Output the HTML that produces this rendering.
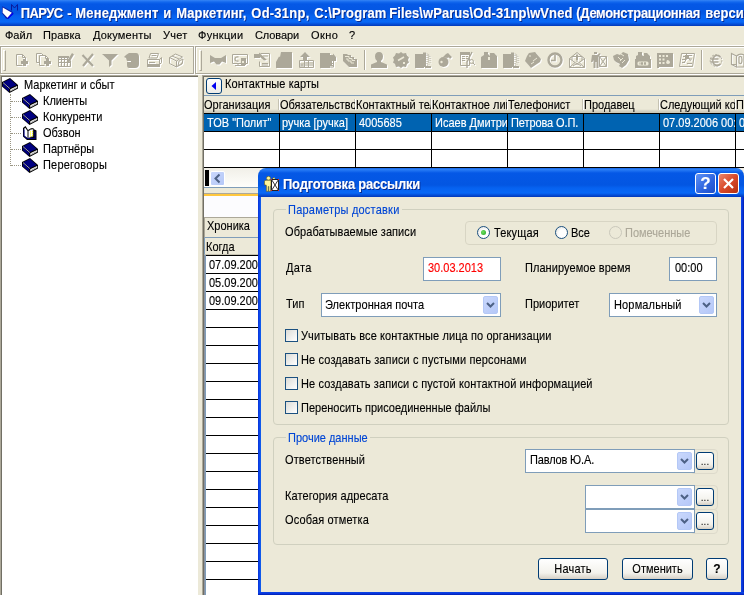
<!DOCTYPE html>
<html lang="ru">
<head>
<meta charset="utf-8">
<title>ПАРУС - Менеджмент и Маркетинг</title>
<style>
html,body{margin:0;padding:0;}
body{width:744px;height:595px;overflow:hidden;background:#ECE9D8;position:relative;will-change:transform;-webkit-text-stroke:0.12px;
 font-family:"Liberation Sans",sans-serif;font-size:11px;color:#000;}
*{box-sizing:border-box;}
.a{position:absolute;white-space:nowrap;line-height:13px;}
span.a,#tree .r,.gl,.btn>span{transform:scaleY(1.12);transform-origin:0 10.3px;}
.btn>span{display:inline-block;line-height:13px;}
.nt{transform:none !important;}
.tt{transform:scaleY(1.1) !important;transform-origin:0 12.5px !important;}
/* main title */
#mtitle{left:0;top:0;width:744px;height:26px;
 background:linear-gradient(#3585F5 0,#1268EE 2px,#0558E6 4px,#0356E2 13px,#0662F0 16px,#0868F6 22px,#0555E0 23.5px,#0338B8 26px);}
#mtitle .txt{position:absolute;top:6px;transform:scaleY(1.1);transform-origin:0 12.5px;font-weight:bold;font-size:13px;line-height:16px;color:#fff;letter-spacing:0.12px;white-space:nowrap;text-shadow:1px 1px 0 #0A2A8C;}
/* menu */
#menu{left:0;top:26px;width:744px;height:19px;background:#ECE9D8;}
#menu span{position:absolute;top:3px;line-height:13px;}
/* toolbar */
.band{border:1px solid #ACA899;box-shadow:inset 1px 1px 0 #fff,1px 1px 0 #fff;}
.grip{position:absolute;width:3px;height:21px;top:50px;border-left:1px solid #fff;border-top:1px solid #fff;border-right:1px solid #ACA899;border-bottom:1px solid #ACA899;}
.ic{position:absolute;overflow:visible;filter:drop-shadow(1px 1px 0 #fff);}
/* tree */
#tree{left:0;top:75px;width:198px;height:520px;background:#fff;border-top:2px solid #716F64;border-left:2px solid #716F64;box-shadow:inset 0 0 0 0 #000;}
#tree .r{position:absolute;line-height:13px;}
/* right */
#rp{left:204px;top:75px;width:540px;height:520px;background:#fff;}
.hl{position:absolute;left:0;width:540px;height:1px;background:#000;}
.vl{position:absolute;top:39px;width:1px;height:54px;background:#000;}
/* dialog */
#dlg{left:258px;top:168px;width:486px;height:427px;background:#ECE9D8;border-radius:8px 8px 0 0;overflow:hidden;}
.gb{position:absolute;border:1px solid #D0D0BF;border-radius:4px;}
.gl{position:absolute;color:#0046D5;background:#ECE9D8;padding:0 2px;line-height:13px;}
.inp{position:absolute;background:#fff;border:1px solid #7F9DB9;}
.cbtn{position:absolute;width:15px;height:18px;border-radius:2px;background:linear-gradient(135deg,#C9D7FC,#B5C8F8);border:1px solid #B4C8F6;}
.chk{position:absolute;width:13px;height:13px;border:1px solid #1C5180;background:linear-gradient(135deg,#DCDCD7,#fff);}
.btn{position:absolute;border:1px solid #003C74;border-radius:3px;background:linear-gradient(#fff,#F3F2EC 70%,#D6D0C5);text-align:center;line-height:20px;}
.rad{position:absolute;width:13px;height:13px;border-radius:50%;border:1px solid #1C5180;background:radial-gradient(circle at 60% 60%,#fff 40%,#DCDCD7);}
</style>
</head>
<body>
<!-- MAIN TITLE -->
<div class="a" id="mtitle">
 <svg style="position:absolute;left:0;top:0" width="22" height="22" viewBox="0 0 22 22">
  <path d="M2.300 6.300 L12.300 11.800 L13.500 13.500 L8 19 L6 18.500 L2 13 Z" fill="#0A1EA8"/>
  <path d="M12.500 12.500 L13.500 14 L8.200 19 L7 18 Z" fill="#0000F0"/>
  <path d="M2.800 7.500 L11.800 12.700 L7.400 17.800 L2.600 12.700 Z" fill="#fff"/>
  <path d="M11.500 10.500 V4.500 L14.500 8 L17.500 4.500 V10.500" fill="none" stroke="#0A1A9A" stroke-width="1"/>
 </svg>
 <span class="txt" style="left:20.8px;letter-spacing:-0.60px">ПАРУС</span>
 <span class="txt" style="left:67.3px;letter-spacing:1.36px">-</span>
 <span class="txt" style="left:75.3px;letter-spacing:0.15px">Менеджмент</span>
 <span class="txt" style="left:163.3px;letter-spacing:0.20px">и</span>
 <span class="txt" style="left:176.3px;letter-spacing:0.04px">Маркетинг,</span>
 <span class="txt" style="left:251.3px;letter-spacing:0.23px">Od-31np,</span>
 <span class="txt" style="left:314.3px;letter-spacing:0.14px">C:\Program</span>
 <span class="txt" style="left:389.3px;letter-spacing:0.07px">Files\wParus\Od-31np\wVned</span>
 <span class="txt" style="left:576.3px;letter-spacing:-0.33px">(Демонстрационная</span>
 <span class="txt" style="left:705.3px;letter-spacing:0.06px">версия</span>
</div>
<!-- MENU -->
<div class="a" id="menu">
 <span style="left:5px">Файл</span><span style="left:43px;letter-spacing:0.1px">Правка</span><span style="left:93px;letter-spacing:0.2px">Документы</span><span style="left:163px;letter-spacing:0.3px">Учет</span><span style="left:198px;letter-spacing:0.3px">Функции</span><span style="left:255px;letter-spacing:-0.1px">Словари</span><span style="left:311px;letter-spacing:0.4px">Окно</span><span style="left:349px">?</span>
</div>
<!-- TOOLBAR -->
<div class="a" style="left:0;top:45px;width:744px;height:1px;background:#fff"></div>
<div class="a band" style="left:0;top:46px;width:194px;height:28px"></div>
<div class="a band" style="left:195px;top:46px;width:560px;height:28px"></div>
<div class="grip" style="left:3px"></div>
<div class="grip" style="left:199px"></div>
<!-- TREE -->
<div class="a" id="tree">
 <span class="r" style="left:22px;top:2px">Маркетинг и сбыт</span>
 <span class="r" style="left:41px;top:18px">Клиенты</span>
 <span class="r" style="left:41px;top:34px;letter-spacing:0.1px">Конкуренти</span>
 <span class="r" style="left:41px;top:50px">Обзвон</span>
 <span class="r" style="left:41px;top:66px">Партнёры</span>
 <span class="r" style="left:41px;top:82px;letter-spacing:0.2px">Переговоры</span>
</div>
<div class="a" style="left:0;top:75px;width:198px;height:1px;background:#ACA899"></div><div class="a" style="left:0;top:75px;width:1px;height:520px;background:#ACA899"></div>
<!--ICONS-->
<svg class="ic" style="left:14px;top:52px;" width="16" height="16" viewBox="0 0 16 16"><path d="M2.5 2.5 h6 l3 3 v2 M2.5 2.5 v11 h6 M8.5 2.5 v3 h3" fill="none" stroke="#ACA899" stroke-width="1"/><path d="M7 9 h2 v-2 h3 v2 h2 v3 h-2 v2 h-3 v-2 h-2 z" fill="#ACA899" stroke="none" stroke-width="1"/></svg>
<svg class="ic" style="left:36px;top:52px;" width="16" height="16" viewBox="0 0 16 16"><path d="M0.5 1.5 h5 l2 2 M0.5 1.5 v9 h3 M3.5 3.5 h6 l3 3 v1 M3.5 3.5 v10 h5 M9.5 3.5 v3 h3" fill="none" stroke="#ACA899" stroke-width="1"/><path d="M8 9 h2 v-2 h3 v2 h2 v3 h-2 v2 h-3 v-2 h-2 z" fill="#ACA899" stroke="none" stroke-width="1"/></svg>
<svg class="ic" style="left:58px;top:52px;" width="16" height="16" viewBox="0 0 16 16"><path d="M0.5 4.5 h10 M0.5 4.5 v10 h12 v-6 M0.5 7.5 h10 M0.5 10.5 h12 M3.5 6 v8 M6.5 6 v8 M9.5 6 v8" fill="none" stroke="#ACA899" stroke-width="1"/><path d="M0 4 h11 v2 h-11 z" fill="#ACA899" stroke="none" stroke-width="1"/><path d="M9 9 L14 1 L16 2.5 L11.5 10 L9 11 Z" fill="#ACA899" stroke="none" stroke-width="1"/></svg>
<svg class="ic" style="left:80px;top:52px;" width="16" height="16" viewBox="0 0 16 16"><path d="M2.5 3 L13 14 M13 2 L3 14" fill="none" stroke="#ACA899" stroke-width="2.2"/></svg>
<svg class="ic" style="left:102px;top:52px;" width="16" height="16" viewBox="0 0 16 16"><path d="M0 2 H16 L9.5 8.5 V13 L7 15 V8.5 Z" fill="#ACA899" stroke="none" stroke-width="1"/></svg>
<svg class="ic" style="left:124px;top:52px;" width="16" height="16" viewBox="0 0 16 16"><path d="M5 1 H12 Q15 1 15 5 V12 Q15 16 11 16 H5 Q3 16 3 13 V10 H7 V9 H3 L2 6 L0 5 L2 3 Z" fill="#ACA899" stroke="none" stroke-width="1"/></svg>
<svg class="ic" style="left:146px;top:52px;" width="16" height="16" viewBox="0 0 16 16"><path d="M4.5 1.5 h8 l-1.5 4.5 h-8 z M5.5 3.5 h5 M1.5 7.5 h12 v5 h-12 z M13.5 7.5 l2 -2 v5 l-2 2 M3 10.5 h6" fill="none" stroke="#ACA899" stroke-width="1"/><path d="M1 12 h13 v3 h-13 z" fill="#ACA899" stroke="none" stroke-width="1"/></svg>
<svg class="ic" style="left:168px;top:52px;" width="16" height="16" viewBox="0 0 16 16"><path d="M1.5 5.5 l6 -3.5 l7 3 l-6 4 z M1.5 5.5 v6 l7 3.5 v-6 M8.5 15 l6 -4 v-2 M4 4 l7 3 M11 9 l4 -2 l-1 5 l-4 2 z" fill="none" stroke="#ACA899" stroke-width="1"/></svg>
<svg class="ic" style="left:210px;top:52px;" width="16" height="16" viewBox="0 0 16 16"><path d="M0 3 L5 6 H11 L16 3 V11 L12 9.5 L9.5 12.5 H6.5 L4 9.5 L0 11 Z" fill="#ACA899" stroke="none" stroke-width="1"/></svg>
<svg class="ic" style="left:232px;top:52px;" width="16" height="16" viewBox="0 0 16 16"><path d="M0.5 2.5 h15 v9 h-15 z M3 13.5 h10 M6 11.5 v2 M10 11.5 v2" fill="none" stroke="#ACA899" stroke-width="1"/><path d="M6.5 5 Q3 4.5 3 7 Q3 9.5 6.5 9" fill="none" stroke="#ACA899" stroke-width="1.3"/><path d="M9 6 h5 v7 h-5 z" fill="#ACA899" stroke="none" stroke-width="1"/><path d="M10 9 h2 v2 h-2 z" fill="#ECE9D8" stroke="none" stroke-width="1"/></svg>
<svg class="ic" style="left:254px;top:52px;" width="16" height="16" viewBox="0 0 16 16"><path d="M6.5 1.5 h9 v13 h-10 v-5 M8 11.5 h6 M8 13 h6 M9 4 h5" fill="none" stroke="#ACA899" stroke-width="1"/><path d="M0 2 H5 V0.5 L13 8 L10 8.5 L6 5 V6 H0 Z" fill="#ACA899" stroke="none" stroke-width="1"/></svg>
<svg class="ic" style="left:276px;top:52px;" width="16" height="16" viewBox="0 0 16 16"><path d="M5 0 H16 V16 H0 V10 L3 4.5 L4 5 Z" fill="#ACA899" stroke="none" stroke-width="1"/></svg>
<svg class="ic" style="left:298px;top:52px;" width="16" height="16" viewBox="0 0 16 16"><path d="M1.5 8.5 h14 v7 h-14 z M6.5 8.5 v7 M6.5 11 h9 M6.5 13 h9 M10.5 8.5 v7 M3 15 v-4 M5 15 v-4 M3 13 h2" fill="none" stroke="#ACA899" stroke-width="1"/><path d="M7 0 L12 5 H9 V8 H5 V5 H2 Z" fill="#ACA899" stroke="none" stroke-width="1"/></svg>
<svg class="ic" style="left:320px;top:52px;" width="16" height="16" viewBox="0 0 16 16"><path d="M0 1 H10 V3 H13 V1.5 L16 5 V9 H12 V14 H10 V16 H0 Z" fill="#ACA899" stroke="none" stroke-width="1"/><path d="M10 11.5 h3 M10 13.5 h3 M13.5 9 v6 h-3.5" fill="none" stroke="#ACA899" stroke-width="1"/></svg>
<svg class="ic" style="left:342px;top:52px;" width="16" height="16" viewBox="0 0 16 16"><path d="M1 2 H5 L6 3 H9 V5 H12 V7 H15 V15 H7 L1 9 Z" fill="#ACA899" stroke="none" stroke-width="1"/><path d="M3 4.500 H7 V6.500 H10 V8.500 H13 M4 7 H6 V9 H9 V11 H12" stroke="#ECE9D8" stroke-width="1" fill="none"/></svg>
<svg class="ic" style="left:371px;top:52px;" width="16" height="16" viewBox="0 0 16 16"><path d="M8 0 Q12 0 12 4.5 Q12 8 10 9 V10 L16 12.5 V16 H0 V12.5 L6 10 V9 Q4 8 4 4.5 Q4 0 8 0 Z" fill="#ACA899" stroke="none" stroke-width="1"/></svg>
<svg class="ic" style="left:393px;top:52px;" width="16" height="16" viewBox="0 0 16 16"><path d="M8 0 L10 1.5 L13 1 L14 3.5 L16 5.5 L15 8 L16 10.5 L14 12 L13 15 L10 14.5 L8 16 L6 14.5 L3 15 L2 12 L0 10.5 L1 8 L0 5.5 L2 3.5 L3 1 L6 1.5 Z" fill="#ACA899" stroke="none" stroke-width="1"/><path d="M5 8.5 L11 5" stroke="#ECE9D8" stroke-width="1.6" fill="none"/><path d="M10 10 h2 v2 h-2 z" fill="#ECE9D8" stroke="none" stroke-width="1"/></svg>
<svg class="ic" style="left:415px;top:52px;" width="16" height="16" viewBox="0 0 16 16"><path d="M0 2 H8 V0.5 H11 V2 V15 H9 V16 H0 Z" fill="#ACA899" stroke="none" stroke-width="1"/><path d="M11.5 2 Q15 2 15 6 V10 Q15 13 12 13 V15" stroke="#ACA899" stroke-width="1" fill="none" stroke-dasharray="1 1"/><path d="M10 14 h6 v2 h-6 z" fill="#ACA899" stroke="none" stroke-width="1"/><path d="M12 3 v9 M13.5 3.5 v8" stroke="#ACA899" stroke-width="1" stroke-dasharray="1 1" fill="none"/></svg>
<svg class="ic" style="left:437px;top:52px;" width="16" height="16" viewBox="0 0 16 16"><circle cx="6.5" cy="10" r="5" fill="#ACA899"/><path d="M6 5 L9 2 L11 1 L12 2 L15 5 L13 7 L12 5.5 L10 6 Z" fill="#ACA899" stroke="none" stroke-width="1"/><circle cx="4.5" cy="10" r="1.2" fill="#ECE9D8"/></svg>
<svg class="ic" style="left:459px;top:52px;" width="16" height="16" viewBox="0 0 16 16"><path d="M1.5 1.5 h9 v12 h-9 z M3 4.5 h3 M3 6.5 h3 M3 8.5 h3 M7 4.5 h2 M7 6.5 h2" fill="none" stroke="#ACA899" stroke-width="1"/><path d="M1 0 h10 v3 h-10 z" fill="#ACA899" stroke="none" stroke-width="1"/><path d="M13 0 L8 10 V16" fill="none" stroke="#ACA899" stroke-width="1.4"/><circle cx="12.5" cy="9.500" r="2" fill="none" stroke="#ACA899"/><path d="M14 11 l2 2" fill="none" stroke="#ACA899" stroke-width="1"/></svg>
<svg class="ic" style="left:481px;top:52px;" width="16" height="16" viewBox="0 0 16 16"><path d="M3 0 H7 V2 L9 4 V1 H13 L16 4 V16 H0 V5 L3 3 Z" fill="#ACA899" stroke="none" stroke-width="1"/><path d="M7 5 h2 v3 h-2 z" fill="#ECE9D8" stroke="none" stroke-width="1"/></svg>
<svg class="ic" style="left:503px;top:52px;" width="16" height="16" viewBox="0 0 16 16"><path d="M0 2 H8 V0.5 H11 V2 V15 H9 V16 H0 Z" fill="#ACA899" stroke="none" stroke-width="1"/><path d="M10 14 h6 v2 h-6 z" fill="#ACA899" stroke="none" stroke-width="1"/><path d="M11.5 2 Q15 2 15 6 V10 Q15 13 12 13 V15 M12 3 v9 M13.5 3.5 v8" stroke="#ACA899" stroke-width="1" stroke-dasharray="1 1" fill="none"/></svg>
<svg class="ic" style="left:525px;top:52px;" width="16" height="16" viewBox="0 0 16 16"><path d="M4 1 L10 0 L16 7 L15 10 L6 16 L0 9 L2 4 Z" fill="#ACA899" stroke="none" stroke-width="1"/><path d="M4 4 h2 M8 9 l4 -3 M6 12 l3 -2" stroke="#ECE9D8" stroke-width="1" fill="none"/></svg>
<svg class="ic" style="left:547px;top:52px;" width="16" height="16" viewBox="0 0 16 16"><circle cx="8" cy="8" r="6.5" fill="none" stroke="#ACA899" stroke-width="2.4"/><path d="M8 3 V8.5 H4" fill="none" stroke="#ACA899" stroke-width="1.6"/></svg>
<svg class="ic" style="left:569px;top:52px;" width="16" height="16" viewBox="0 0 16 16"><path d="M0.5 6.5 L8 0.5 L15.5 6.5 V15.5 H0.500 Z M0.5 6.5 L8 12 L15.5 6.5 M0.5 15.5 L6 10.5 M15.5 15.5 L10 10.5 M3 4.500 h10 v4 M3 4.500 v4 M8 2 v8 M4 14 Q8 10 12 14" fill="none" stroke="#ACA899" stroke-width="1"/><path d="M7 3 h2 v5 h-2 z" fill="#ACA899" stroke="none" stroke-width="1"/></svg>
<svg class="ic" style="left:591px;top:52px;" width="16" height="16" viewBox="0 0 16 16"><path d="M3 0 h3 v2 h-3 z M1 3 H6 L9 1 L9.5 2 L7.5 5 V16 H5.5 V10 H4.5 V16 H2.500 V8 L1.500 10 H0 Z" fill="#ACA899" stroke="none" stroke-width="1"/><path d="M8.5 4.5 h7 v10 h-7 z M8.5 4.5 l7 10 M15.5 4.5 l-7 10" fill="none" stroke="#ACA899" stroke-width="1"/></svg>
<svg class="ic" style="left:613px;top:52px;" width="16" height="16" viewBox="0 0 16 16"><path d="M0 4 L4 2 L7 3 L10 0 L15 2 L16 8 L13 13 L9 16 L6 14 L7 12 L3 10 L1 8 Z" fill="#ACA899" stroke="none" stroke-width="1"/><path d="M5 5 l3 3 M7 9 l3 -3 M9 11 l3 -3 M8 2 l3 2" stroke="#ECE9D8" stroke-width="1" fill="none"/></svg>
<svg class="ic" style="left:635px;top:52px;" width="16" height="16" viewBox="0 0 16 16"><path d="M3 0 H7 V3 L8 4 H9 V1 H12 L15 4 V7 H16 V16 H0 V7 H1 V4 L3 3 Z" fill="#ACA899" stroke="none" stroke-width="1"/><rect x="2.500" y="9.500" width="11" height="4" rx="1.5" fill="#ECE9D8"/><path d="M5 10.5 v2 M7.5 10.5 v2 h-1 v-2 h1 M10.5 10.5 v2 h-1 v-2 h1" fill="none" stroke="#ACA899" stroke-width="1"/></svg>
<svg class="ic" style="left:657px;top:52px;" width="16" height="16" viewBox="0 0 16 16"><path d="M0 1 H16 V15 H2 V16 H0 Z" fill="#ACA899" stroke="none" stroke-width="1"/><path d="M2 3 h2 v2 h-2 z M5.500 3 h2 v2 h-2 z M9 3 h2 v2 h-2 z M2 6.500 h2 v2 h-2 z M5.500 6.500 h2 v2 h-2 z M2 10 h2 v2 h-2 z M5.500 10 h2 v2 h-2 z M10 8 Q13 8 13 11 Q11 13 9 11 Z" fill="#ECE9D8"/></svg>
<svg class="ic" style="left:679px;top:52px;" width="16" height="16" viewBox="0 0 16 16"><path d="M2.5 1.5 h13 l-2 13 h-13 z M4 4.500 h3 M9 3.500 h4 M3 7.500 h4 M10 7 h3 M3 10.500 h3 M8 11.500 h5 M7.5 2 v5 l-2 3 M9.5 5 l2 4" fill="none" stroke="#ACA899" stroke-width="1"/><path d="M6 3 h4 v4 h-4 z" fill="#ACA899" stroke="none" stroke-width="1"/></svg>
<svg class="ic" style="left:708px;top:52px;" width="16" height="16" viewBox="0 0 16 16"><circle cx="8" cy="8.500" r="5.8" fill="none" stroke="#ACA899" stroke-width="1" stroke-dasharray="2 1.2"/><path d="M12.5 5 Q8 1.500 5.500 5.500 Q4 8.500 5.500 11.500 Q8 15 12.500 12 M2.500 7 h8 M2.500 10 h8" fill="none" stroke="#ACA899" stroke-width="1.7"/></svg>
<svg class="ic" style="left:730px;top:52px;" width="16" height="16" viewBox="0 0 16 16"><path d="M1.5 1.5 v11 l5 2.500 v-11 z M6.500 4 Q10 1 14 3 V14 M1.500 12.500 h5 M9 5 Q12 3 12 8 Q12 13 9 11 Z M14 3 v12 h-7" fill="none" stroke="#ACA899" stroke-width="1.2"/></svg>
<div class="a" style="left:364px;top:50px;width:1px;height:20px;background:#ACA899"></div><div class="a" style="left:365px;top:50px;width:1px;height:20px;background:#fff"></div>
<div class="a" style="left:701px;top:50px;width:1px;height:20px;background:#ACA899"></div><div class="a" style="left:702px;top:50px;width:1px;height:20px;background:#fff"></div>
<svg class="a" style="left:2px;top:78px" width="16" height="16" viewBox="0 0 16 16"><path d="M8 0 L0 4 V8.5 L7.5 15 L16 10.5 V7 Z" fill="#000"/><path d="M8 1 L1.3 4.200 L8 10 L14.600 7 Z" fill="#000080"/><path d="M0.800 5.200 V8.200 L7 13.700 V10.700 Z" fill="#000080"/><path d="M8.300 11.300 L15.200 8 V9.800 L8.300 13.600 Z" fill="#fff"/><path d="M9 12.500 L14.500 9.500" stroke="#808080" stroke-width="0.700" fill="none"/><path d="M1 4.600 L7.800 10.500" stroke="#C8C8F0" stroke-width="0.800" fill="none"/></svg>
<svg class="a" style="left:22px;top:94px" width="16" height="16" viewBox="0 0 16 16"><path d="M8 0 L0 4 V8.5 L7.5 15 L16 10.5 V7 Z" fill="#000"/><path d="M8 1 L1.3 4.200 L8 10 L14.600 7 Z" fill="#000080"/><path d="M0.800 5.200 V8.200 L7 13.700 V10.700 Z" fill="#000080"/><path d="M8.300 11.300 L15.200 8 V9.800 L8.300 13.600 Z" fill="#fff"/><path d="M9 12.500 L14.500 9.500" stroke="#808080" stroke-width="0.700" fill="none"/><path d="M1 4.600 L7.800 10.500" stroke="#C8C8F0" stroke-width="0.800" fill="none"/></svg>
<div class="a" style="left:11px;top:101px;width:10px;height:0;border-top:1px dotted #9A9684"></div>
<svg class="a" style="left:22px;top:110px" width="16" height="16" viewBox="0 0 16 16"><path d="M8 0 L0 4 V8.5 L7.5 15 L16 10.5 V7 Z" fill="#000"/><path d="M8 1 L1.3 4.200 L8 10 L14.600 7 Z" fill="#000080"/><path d="M0.800 5.200 V8.200 L7 13.700 V10.700 Z" fill="#000080"/><path d="M8.300 11.300 L15.200 8 V9.800 L8.300 13.600 Z" fill="#fff"/><path d="M9 12.500 L14.500 9.500" stroke="#808080" stroke-width="0.700" fill="none"/><path d="M1 4.600 L7.800 10.500" stroke="#C8C8F0" stroke-width="0.800" fill="none"/></svg>
<div class="a" style="left:11px;top:117px;width:10px;height:0;border-top:1px dotted #9A9684"></div>
<svg class="a" style="left:22px;top:126px" width="16" height="16" viewBox="0 0 16 16"><path d="M1 2 L3.5 0 L6 4 L9 2.200 L11.500 2 L11.500 3 L14.500 4.500 V14 H5 L1 10.500 Z" fill="#000"/><path d="M2 3 L3.300 1.800 L5.500 5 V12.200 L2 9.800 Z" fill="#fff"/><path d="M1.600 3.500 V10.200 L5.200 13 H13.500 V5.500 L12.500 5 V12 H5.500 L2.600 9.800 V3.200 Z" fill="#000080"/><path d="M6.500 5 Q9 3 11 3 V10.500 Q8.500 10.500 6.500 12 Z" fill="#fff" stroke="#808080" stroke-width="0.600"/><path d="M8 5.500 h1 v1 h-1 z M10 5 h1 v1 h-1 z M8 7.500 h1 v1 h-1 z M10 7 h1 v1 h-1 z M8 9.500 h1 v1 h-1 z M10 9 h1 v1 h-1 z" fill="#FFFF00"/></svg>
<div class="a" style="left:11px;top:133px;width:10px;height:0;border-top:1px dotted #9A9684"></div>
<svg class="a" style="left:22px;top:142px" width="16" height="16" viewBox="0 0 16 16"><path d="M8 0 L0 4 V8.5 L7.5 15 L16 10.5 V7 Z" fill="#000"/><path d="M8 1 L1.3 4.200 L8 10 L14.600 7 Z" fill="#000080"/><path d="M0.800 5.200 V8.200 L7 13.700 V10.700 Z" fill="#000080"/><path d="M8.300 11.300 L15.200 8 V9.800 L8.300 13.600 Z" fill="#fff"/><path d="M9 12.500 L14.500 9.500" stroke="#808080" stroke-width="0.700" fill="none"/><path d="M1 4.600 L7.800 10.500" stroke="#C8C8F0" stroke-width="0.800" fill="none"/></svg>
<div class="a" style="left:11px;top:149px;width:10px;height:0;border-top:1px dotted #9A9684"></div>
<svg class="a" style="left:22px;top:158px" width="16" height="16" viewBox="0 0 16 16"><path d="M8 0 L0 4 V8.5 L7.5 15 L16 10.5 V7 Z" fill="#000"/><path d="M8 1 L1.3 4.200 L8 10 L14.600 7 Z" fill="#000080"/><path d="M0.800 5.200 V8.200 L7 13.700 V10.700 Z" fill="#000080"/><path d="M8.300 11.300 L15.200 8 V9.800 L8.300 13.600 Z" fill="#fff"/><path d="M9 12.500 L14.500 9.500" stroke="#808080" stroke-width="0.700" fill="none"/><path d="M1 4.600 L7.800 10.500" stroke="#C8C8F0" stroke-width="0.800" fill="none"/></svg>
<div class="a" style="left:11px;top:165px;width:10px;height:0;border-top:1px dotted #9A9684"></div>
<div class="a" style="left:10px;top:94px;width:0;height:72px;border-left:1px dotted #9A9684"></div>
<!--/ICONS-->
<!-- RIGHT PANEL -->
<div class="a" id="rp">
 <div class="a" style="left:0;top:0;width:540px;height:21px;background:#ECE9D8;border-bottom:1px solid #7F9DB9"></div>
 <div class="a" style="left:2px;top:3px;width:16px;height:16px;border:1px solid #003C74;border-radius:3px;background:linear-gradient(#fff,#ECEBE6)"></div>
 <svg class="a" style="left:2px;top:3px" width="16" height="16"><path d="M10 4 L10 12 L5.5 8 Z" fill="#0000F0"/></svg>
 <span class="a" style="left:21px;top:3px;letter-spacing:0.08px">Контактные карты</span>
 <div class="a" id="ghead" style="left:0;top:21px;width:540px;height:17px;background:linear-gradient(#ECE9D8 0,#ECE9D8 13px,#E2DFCE 14px,#D6D2C2 15px,#C9C6B5 17px);overflow:hidden">
  <div class="a" style="left:74px;top:3px;width:1px;height:11px;background:#C5C2B2"></div><div class="a" style="left:75px;top:3px;width:1px;height:11px;background:#fff"></div><div class="a" style="left:150px;top:3px;width:1px;height:11px;background:#C5C2B2"></div><div class="a" style="left:151px;top:3px;width:1px;height:11px;background:#fff"></div><div class="a" style="left:226px;top:3px;width:1px;height:11px;background:#C5C2B2"></div><div class="a" style="left:227px;top:3px;width:1px;height:11px;background:#fff"></div><div class="a" style="left:302px;top:3px;width:1px;height:11px;background:#C5C2B2"></div><div class="a" style="left:303px;top:3px;width:1px;height:11px;background:#fff"></div><div class="a" style="left:378px;top:3px;width:1px;height:11px;background:#C5C2B2"></div><div class="a" style="left:379px;top:3px;width:1px;height:11px;background:#fff"></div><div class="a" style="left:454px;top:3px;width:1px;height:11px;background:#C5C2B2"></div><div class="a" style="left:455px;top:3px;width:1px;height:11px;background:#fff"></div><div class="a" style="left:530px;top:3px;width:1px;height:11px;background:#C5C2B2"></div><div class="a" style="left:531px;top:3px;width:1px;height:11px;background:#fff"></div>
  <span class="a" style="left:0px;top:3px">Организация</span>
  <span class="a" style="left:76px;top:3px;width:75px;overflow:hidden">Обязательство</span>
  <span class="a" style="left:152px;top:3px;width:75px;overflow:hidden">Контактный тел</span>
  <span class="a" style="left:228px;top:3px;width:75px;overflow:hidden">Контактное лиц</span>
  <span class="a" style="left:304px;top:3px">Телефонист</span>
  <span class="a" style="left:380px;top:3px">Продавец</span>
  <span class="a" style="left:456px;top:3px;width:75px;overflow:hidden">Следующий кон</span>
  <span class="a" style="left:532px;top:3px">П</span>
 </div>
 <div class="a" style="left:0;top:38px;width:540px;height:19px;background:#0063B1;color:#fff;border-top:1px solid #000;border-bottom:1px solid #000;overflow:hidden">
  <span class="a" style="left:3px;top:3px">ТОВ "Полит"</span>
  <span class="a" style="left:78px;top:3px">ручка [ручка]</span>
  <span class="a" style="left:155px;top:3px">4005685</span>
  <span class="a" style="left:231px;top:3px;width:73px;overflow:hidden">Исаев Дмитрий</span>
  <span class="a" style="left:307px;top:3px;letter-spacing:-0.1px">Петрова О.П.</span>
  <span class="a" style="left:459px;top:3px;width:73px;overflow:hidden">07.09.2006 00:0</span>
  <span class="a" style="left:535px;top:3px">0</span>
 </div>
 <div class="hl" style="top:74px"></div>
 <div class="hl" style="top:92px"></div>
 <div class="vl" style="left:75px"></div><div class="vl" style="left:151px"></div><div class="vl" style="left:227px"></div><div class="vl" style="left:303px"></div><div class="vl" style="left:379px"></div><div class="vl" style="left:455px"></div><div class="vl" style="left:531px"></div>
 <!-- scrollbar -->
 <div class="a" style="left:0;top:93px;width:540px;height:20px;background:linear-gradient(#F1EFE8,#FEFEFB);border-bottom:1px solid #7F9DB9"></div>
 <div class="a" style="left:1px;top:95px;width:4px;height:16px;background:#000"></div>
 <div class="a" style="left:6px;top:96px;width:15px;height:15px;border-radius:2px;background:linear-gradient(135deg,#C9D7FC,#B5C8F8);border:1px solid #fff"></div>
 <svg class="a" style="left:6px;top:96px" width="15" height="15"><path d="M9.5 3.5 L5.5 7.5 L9.5 11.5" fill="none" stroke="#4D6185" stroke-width="2"/></svg>
 <div class="a" style="left:0;top:113px;width:540px;height:6px;background:#ECE9D8;border-bottom:1px solid #ACA899"></div>
 <div class="a" style="left:0;top:119px;width:540px;height:2px;background:#FFC73C"></div>
 <div class="a" style="left:0;top:121px;width:540px;height:21px;background:#FCFCFE"></div>
 <div class="a" style="left:0;top:142px;width:540px;height:21px;background:#ECE9D8;border-top:1px solid #ACA899;border-left:1px solid #ACA899;border-bottom:1px solid #7F9DB9"></div>
 <span class="a" style="left:3px;top:145px">Хроника</span>
 <div class="a" style="left:0;top:163px;width:540px;height:17px;background:#ECE9D8;border-left:1px solid #7F9DB9;border-bottom:1px solid #C5C2B2"></div>
 <span class="a" style="left:2px;top:166px">Когда</span>
 <div class="a" style="left:0;top:180px;width:1px;height:341px;background:#8A92A0"></div><div class="a" style="left:1px;top:180px;width:1px;height:341px;background:#7F9DB9"></div>
<div class="hl" style="left:2px;top:180px"></div>
 <div class="a" style="left:2px;top:181px;width:538px;height:340px;background:repeating-linear-gradient(#fff 0,#fff 17px,#000 17px,#000 18px)"></div>
 <span class="a" style="left:5px;top:184px">07.09.2006</span>
 <span class="a" style="left:5px;top:202px">05.09.2006</span>
 <span class="a" style="left:5px;top:220px">09.09.2006</span>
 
</div>
<div class="a" style="left:202px;top:75px;width:542px;height:1px;background:#ACA899"></div><div class="a" style="left:203px;top:76px;width:541px;height:1px;background:#716F64"></div><div class="a" style="left:202px;top:75px;width:1px;height:520px;background:#ACA899"></div><div class="a" style="left:203px;top:76px;width:1px;height:519px;background:#716F64"></div>

<!-- DIALOG -->
<div class="a" id="dlg">
 <div class="a" style="left:0;top:0;width:486px;height:29px;background:linear-gradient(#0A5AE0 0,#2F82F6 1px,#1A6EF0 3px,#0558E6 5px,#0356E2 17px,#0662F0 20px,#0868F6 25px,#0555E0 26.5px,#0338B8 29px)"></div>
 <div class="a" style="left:0;top:29px;width:3px;height:398px;background:linear-gradient(90deg,#0831D9,#0A48E8,#1462EC)"></div>
 <div class="a" style="left:483px;top:29px;width:3px;height:398px;background:linear-gradient(90deg,#0A48E8,#0831D9 60%,#001EA8)"></div>
 <div class="a" style="left:0;top:424px;width:486px;height:3px;background:linear-gradient(#0A48E8,#0831D9 60%,#001EA8)"></div>
 <span class="a tt" style="left:25px;top:9px;font-weight:bold;font-size:13px;line-height:16px;color:#fff;letter-spacing:-0.22px;text-shadow:1px 1px 0 #0A2A8C">Подготовка рассылки</span>
 <svg class="a" style="left:5px;top:8px" width="17" height="16" viewBox="0 0 17 16">
  <path d="M7 6.500 L11.500 2" stroke="#6A5A10" stroke-width="2.400" fill="none"/>
  <path d="M7 6.500 L11.500 2" stroke="#FFF79A" stroke-width="1.200" fill="none"/>
  <circle cx="5.500" cy="2.200" r="2" fill="#FFF79A" stroke="#6A5A10" stroke-width="0.600"/>
  <path d="M1.500 5.500 Q1.500 4.300 3 4.300 H8 V10 H7.600 V15.300 H5.800 V10.500 H5.200 V15.300 H3.400 V10 H3.200 V9 H1.500 Z" fill="#FFF79A" stroke="#6A5A10" stroke-width="0.600"/>
  <rect x="8.500" y="3.500" width="7" height="11" fill="#fff" stroke="#222" stroke-width="1"/>
  <path d="M8.500 3.500 L15.500 14.500 M15.500 3.500 L8.500 14.500" stroke="#333" stroke-width="1" fill="none"/>
  <rect x="8" y="3" width="1" height="1" fill="#E02020"/><rect x="15" y="3" width="1" height="1" fill="#E02020"/><rect x="15" y="14" width="1" height="1" fill="#E02020"/><rect x="8" y="14" width="1" height="1" fill="#E02020"/>
 </svg>
 <div class="a" style="left:437px;top:5px;width:21px;height:21px;border:1px solid #fff;border-radius:3px;background:linear-gradient(135deg,#5F93F5,#2C62DE 60%,#1F4FC8)"></div>
 <span class="a nt" style="left:437px;top:5px;width:21px;text-align:center;color:#fff;font-weight:bold;font-size:17px;line-height:22px">?</span>
 <div class="a" style="left:460px;top:5px;width:21px;height:21px;border:1px solid #fff;border-radius:3px;background:linear-gradient(135deg,#E9866C,#D9492A 50%,#B5300F)"></div>
 <svg class="a" style="left:460px;top:5px" width="21" height="21"><path d="M6 6 L15 15 M15 6 L6 15" stroke="#fff" stroke-width="2.2" fill="none"/></svg>
 <div class="gb" style="left:15px;top:41px;width:456px;height:216px"></div>
 <span class="gl" style="left:28px;top:36px;letter-spacing:0.22px">Параметры доставки</span>
 <span class="a" style="left:27px;top:58px;letter-spacing:0.08px">Обрабатываемые записи</span>
 <div class="gb" style="left:207px;top:53px;width:252px;height:24px;border-color:#D8D5C4"></div>
 <div class="rad" style="left:219px;top:58px"></div>
 <div class="a" style="left:223px;top:62px;width:5px;height:5px;border-radius:50%;background:radial-gradient(circle at 40% 40%,#6FE060,#21A121)"></div>
 <span class="a" style="left:236px;top:59px;letter-spacing:0.15px">Текущая</span>
 <div class="rad" style="left:297px;top:58px"></div>
 <span class="a" style="left:313px;top:59px">Все</span>
 <div class="rad" style="left:351px;top:58px;border-color:#CAC8BB;background:#ECE9D8"></div>
 <span class="a" style="left:367px;top:59px;color:#ACA899">Помеченные</span>
 <span class="a" style="left:28px;top:94px;letter-spacing:0.30px">Дата</span>
 <div class="inp" style="left:165px;top:89px;width:78px;height:24px"></div>
 <span class="a" style="left:170px;top:94px;color:#FF0000">30.03.2013</span>
 <span class="a" style="left:267px;top:94px;letter-spacing:0.06px">Планируемое время</span>
 <div class="inp" style="left:411px;top:89px;width:48px;height:24px"></div>
 <span class="a" style="left:417px;top:94px">00:00</span>
 <span class="a" style="left:28px;top:130px">Тип</span>
 <div class="inp" style="left:63px;top:125px;width:180px;height:24px"></div>
 <span class="a" style="left:67px;top:131px;letter-spacing:0.06px">Электронная почта</span>
 <div class="cbtn" style="left:225px;top:128px"></div>
 <svg class="a" style="left:225px;top:128px" width="15" height="18"><path d="M4 7 L7.5 10.5 L11 7" fill="none" stroke="#4D6185" stroke-width="2"/></svg>
 <span class="a" style="left:267px;top:130px">Приоритет</span>
 <div class="inp" style="left:351px;top:125px;width:108px;height:24px"></div>
 <span class="a" style="left:356px;top:131px;letter-spacing:0.15px">Нормальный</span>
 <div class="cbtn" style="left:441px;top:128px"></div>
 <svg class="a" style="left:441px;top:128px" width="15" height="18"><path d="M4 7 L7.5 10.5 L11 7" fill="none" stroke="#4D6185" stroke-width="2"/></svg>
 <div class="chk" style="left:27px;top:161px"></div>
 <span class="a" style="left:43px;top:162px;letter-spacing:0.10px">Учитывать все контактные лица по организации</span>
 <div class="chk" style="left:27px;top:185px"></div>
 <span class="a" style="left:43px;top:186px;letter-spacing:0.13px">Не создавать записи с пустыми персонами</span>
 <div class="chk" style="left:27px;top:209px"></div>
 <span class="a" style="left:43px;top:210px;letter-spacing:0.10px">Не создавать записи с пустой контактной информацией</span>
 <div class="chk" style="left:27px;top:233px"></div>
 <span class="a" style="left:43px;top:234px">Переносить присоединенные файлы</span>
 <div class="gb" style="left:15px;top:269px;width:456px;height:108px"></div>
 <span class="gl" style="left:28px;top:264px">Прочие данные</span>
 <span class="a" style="left:27px;top:286px;letter-spacing:0.12px">Ответственный</span>
 <span class="a" style="left:27px;top:322px;letter-spacing:0.10px">Категория адресата</span>
 <span class="a" style="left:27px;top:346px;letter-spacing:0.15px">Особая отметка</span>
 <div class="gb" style="left:432px;top:281px;width:28px;height:25px;border-color:#DDDACB"></div>
 <div class="inp" style="left:267px;top:281px;width:170px;height:24px"></div>
 <span class="a" style="left:272px;top:286px;letter-spacing:-0.15px">Павлов Ю.А.</span>
 <div class="cbtn" style="left:419px;top:284px"></div>
 <svg class="a" style="left:419px;top:284px" width="15" height="18"><path d="M4 7 L7.5 10.5 L11 7" fill="none" stroke="#4D6185" stroke-width="2"/></svg>
 <div class="btn" style="left:438px;top:284px;width:18px;height:18px;line-height:17px;font-size:10px;-webkit-text-stroke:0"><span class="nt">...</span></div>
 <div class="gb" style="left:432px;top:317px;width:28px;height:25px;border-color:#DDDACB"></div>
 <div class="inp" style="left:327px;top:317px;width:110px;height:24px"></div>
 <div class="cbtn" style="left:419px;top:320px"></div>
 <svg class="a" style="left:419px;top:320px" width="15" height="18"><path d="M4 7 L7.5 10.5 L11 7" fill="none" stroke="#4D6185" stroke-width="2"/></svg>
 <div class="btn" style="left:438px;top:320px;width:18px;height:18px;line-height:17px;font-size:10px;-webkit-text-stroke:0"><span class="nt">...</span></div>
 <div class="gb" style="left:432px;top:341px;width:28px;height:25px;border-color:#DDDACB"></div>
 <div class="inp" style="left:327px;top:341px;width:110px;height:24px"></div>
 <div class="cbtn" style="left:419px;top:344px"></div>
 <svg class="a" style="left:419px;top:344px" width="15" height="18"><path d="M4 7 L7.5 10.5 L11 7" fill="none" stroke="#4D6185" stroke-width="2"/></svg>
 <div class="btn" style="left:438px;top:344px;width:18px;height:18px;line-height:17px;font-size:10px;-webkit-text-stroke:0"><span class="nt">...</span></div>
 <div class="btn" style="left:280px;top:390px;width:70px;height:22px"><span style="letter-spacing:0.2px">Начать</span></div>
 <div class="btn" style="left:364px;top:390px;width:71px;height:22px"><span>Отменить</span></div>
 <div class="btn" style="left:448px;top:390px;width:22px;height:22px;font-weight:bold;font-size:12px"><span>?</span></div>
</div>
</body>
</html>
